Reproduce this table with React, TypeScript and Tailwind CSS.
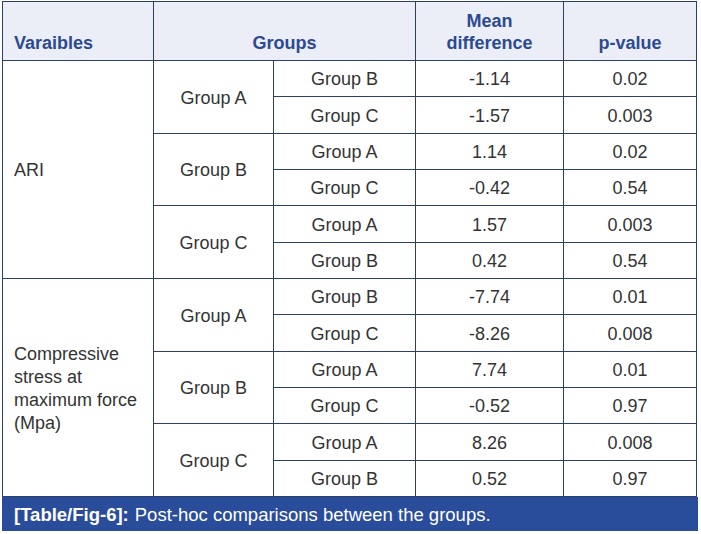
import React from "react";

const line = "border-[#2b3f6b]";

type Row = { g2: string; diff: string; p: string };
type Block = { g1: string; rows: Row[] };

const ari: Block[] = [
  { g1: "Group A", rows: [{ g2: "Group B", diff: "-1.14", p: "0.02" }, { g2: "Group C", diff: "-1.57", p: "0.003" }] },
  { g1: "Group B", rows: [{ g2: "Group A", diff: "1.14", p: "0.02" }, { g2: "Group C", diff: "-0.42", p: "0.54" }] },
  { g1: "Group C", rows: [{ g2: "Group A", diff: "1.57", p: "0.003" }, { g2: "Group B", diff: "0.42", p: "0.54" }] },
];
const cs: Block[] = [
  { g1: "Group A", rows: [{ g2: "Group B", diff: "-7.74", p: "0.01" }, { g2: "Group C", diff: "-8.26", p: "0.008" }] },
  { g1: "Group B", rows: [{ g2: "Group A", diff: "7.74", p: "0.01" }, { g2: "Group C", diff: "-0.52", p: "0.97" }] },
  { g1: "Group C", rows: [{ g2: "Group A", diff: "8.26", p: "0.008" }, { g2: "Group B", diff: "0.52", p: "0.97" }] },
];

const heights = [
  ["h-[36px]", "h-[37px]"],
  ["h-[36px]", "h-[36px]"],
  ["h-[37px]", "h-[36px]"],
];

const cell = `border-r border-b ${line} flex items-center justify-center pt-[2px]`;

function Section({ label, blocks }: { label: React.ReactNode; blocks: Block[] }) {
  return (
    <div className="grid grid-cols-[151px_120px_142px_148px_133px]">
      <div className={`border-r border-b ${line} flex items-center pl-[11px] pt-[2px] leading-[23px]`}>{label}</div>
      <div className="col-span-4 flex flex-col">
        {blocks.map((b, i) => (
          <div key={i} className="grid grid-cols-[120px_142px_148px_133px]">
            <div className={cell}>{b.g1}</div>
            <div className="col-span-3 flex flex-col">
              {b.rows.map((r, j) => (
                <div key={j} className={`grid grid-cols-[142px_148px_133px] ${heights[i][j]}`}>
                  <div className={cell}>{r.g2}</div>
                  <div className={cell}>{r.diff}</div>
                  <div className={cell}>{r.p}</div>
                </div>
              ))}
            </div>
          </div>
        ))}
      </div>
    </div>
  );
}

export default function App() {
  return (
    <div
      className="w-[701px] h-[534px] bg-white relative text-[18px] text-[#333333]"
      style={{ fontFamily: '"Liberation Sans", Arial, sans-serif' }}
    >
      <div className="pt-[1px] pl-[2px]">
        <div className={`w-[695px] border-l border-t ${line}`}>
          <div className="grid grid-cols-[151px_262px_148px_133px] h-[59px] bg-[#eceef7] font-bold text-[#2c4a92] leading-[22px]">
            <div className={`border-r border-b ${line} flex items-end pl-[11px] pb-[6px]`}>Varaibles</div>
            <div className={`border-r border-b ${line} flex items-end justify-center pb-[6px]`}>Groups</div>
            <div className={`border-r border-b ${line} flex items-end justify-center pb-[6px] text-center`}>
              Mean
              <br />
              difference
            </div>
            <div className={`border-r border-b ${line} flex items-end justify-center pb-[6px]`}>p-value</div>
          </div>
          <Section label="ARI" blocks={ari} />
          <Section
            label={
              <span>
                Compressive
                <br />
                stress at
                <br />
                maximum force
                <br />
                (Mpa)
              </span>
            }
            blocks={cs}
          />
        </div>
        <div className="w-[696px] h-[34px] bg-[#2a4d9b] text-white text-[18.5px] flex items-center pl-[12px] pt-[1px]">
          <span className="font-bold">[Table/Fig-6]:</span>
          <span className="ml-[6px]">Post-hoc comparisons between the groups.</span>
        </div>
      </div>
    </div>
  );
}
